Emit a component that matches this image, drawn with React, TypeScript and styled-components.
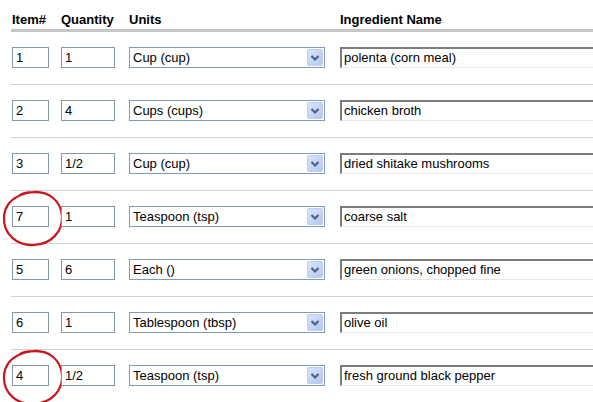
import React from 'react';
import styled, { createGlobalStyle } from 'styled-components';

const GlobalStyle = createGlobalStyle`
  html, body {
    margin: 0;
    padding: 0;
    background: #ffffff;
    overflow: hidden;
  }
  body {
    font-family: "Liberation Sans", Arial, sans-serif;
  }
`;

type Ingredient = {
  item: string;
  qty: string;
  unit: string;
  name: string;
  circled?: boolean;
};

const rows: Ingredient[] = [
  { item: '1', qty: '1', unit: 'Cup (cup)', name: 'polenta (corn meal)' },
  { item: '2', qty: '4', unit: 'Cups (cups)', name: 'chicken broth' },
  { item: '3', qty: '1/2', unit: 'Cup (cup)', name: 'dried shitake mushrooms' },
  { item: '7', qty: '1', unit: 'Teaspoon (tsp)', name: 'coarse salt', circled: true },
  { item: '5', qty: '6', unit: 'Each ()', name: 'green onions, chopped fine' },
  { item: '6', qty: '1', unit: 'Tablespoon (tbsp)', name: 'olive oil' },
  { item: '4', qty: '1/2', unit: 'Teaspoon (tsp)', name: 'fresh ground black pepper', circled: true },
];

// the ingredient column runs off the right edge in the screenshot
const Sheet = styled.div`
  margin-left: 11px;
  width: 582px;
`;

const Row = styled.div<{ $head?: boolean; $last?: boolean }>`
  display: grid;
  grid-template-columns: 49px 68px 211px 1fr;
  align-items: start;
  padding-left: 1px;
  box-sizing: border-box;
  height: ${(p) => (p.$head ? '32px' : '53px')};
  padding-top: ${(p) => (p.$head ? '12px' : '15px')};
  border-bottom: ${(p) =>
    p.$head ? '3px solid #c6c6c6' : p.$last ? 'none' : '1px solid #d2d2d2'};
`;

const HeadCell = styled.div`
  font-size: 13px;
  font-weight: bold;
  line-height: 15px;
  color: #000;
  white-space: nowrap;
`;

const Cell = styled.div`
  position: relative;
  min-width: 0;
`;

const Field = styled.div<{ $w: number }>`
  box-sizing: border-box;
  width: ${(p) => p.$w}px;
  height: 21px;
  border: 1px solid #8696a6;
  background: #fff;
  font-size: 13px;
  line-height: 19px;
  padding-left: 3px;
  color: #000;
  white-space: nowrap;
  overflow: hidden;
`;

const NameField = styled.div`
  box-sizing: border-box;
  width: 100%;
  height: 21px;
  border-top: 2px solid #7c7c7c;
  border-left: 2px solid #7c7c7c;
  border-bottom: 1px solid #e6e6e6;
  background: #fff;
  font-size: 13px;
  line-height: 18px;
  padding-left: 2px;
  color: #000;
  white-space: nowrap;
  overflow: hidden;
`;

const Select = styled.div`
  box-sizing: border-box;
  width: 196px;
  height: 21px;
  border: 1px solid #7f9db9;
  background: #fff;
  display: flex;
  align-items: center;
  justify-content: space-between;
  padding: 0 1px 0 3px;
  font-size: 13px;
  color: #000;
  white-space: nowrap;
`;

const DropButton = styled.span`
  display: flex;
  width: 16px;
  height: 17px;
`;

const Ring = styled.svg`
  position: absolute;
  left: -11px;
  top: -16px;
  width: 64px;
  height: 58px;
  pointer-events: none;
  overflow: visible;
`;

const Arrow = () => (
  <DropButton>
    <svg width="16" height="17" viewBox="0 0 16 17">
      <defs>
        <linearGradient id="dd" x1="0" y1="0" x2="1" y2="1">
          <stop offset="0" stopColor="#dce6fb" />
          <stop offset="1" stopColor="#b3c5f0" />
        </linearGradient>
      </defs>
      <rect x="0.5" y="0.5" width="15" height="16" rx="1.5" fill="url(#dd)" stroke="#bccdf2" />
      <path d="M4.5 7 L8 10.5 L11.5 7" fill="none" stroke="#4d6185" strokeWidth="2.2" />
    </svg>
  </DropButton>
);

const CircleMark = () => (
  <Ring viewBox="0 0 64 58">
    <path
      d="M42 3 C26 0 4 7 3 27 C2 45 17 56 33 55 C50 54 62 42 61 26 C60 11 48 1 32 2 C26 2 22 3 19 5"
      fill="none"
      stroke="#c8161c"
      strokeWidth="2.2"
      strokeLinecap="round"
    />
  </Ring>
);

const App = () => {
  return (
    <>
      <GlobalStyle />
      <Sheet>
        <Row $head>
          <HeadCell>Item#</HeadCell>
          <HeadCell>Quantity</HeadCell>
          <HeadCell>Units</HeadCell>
          <HeadCell>Ingredient Name</HeadCell>
        </Row>
        {rows.map((r, i) => (
          <Row key={i} $last={i === rows.length - 1}>
            <Cell>
              <Field $w={37}>{r.item}</Field>
              {r.circled && <CircleMark />}
            </Cell>
            <Cell>
              <Field $w={54}>{r.qty}</Field>
            </Cell>
            <Cell>
              <Select>
                <span>{r.unit}</span>
                <Arrow />
              </Select>
            </Cell>
            <Cell>
              <NameField>{r.name}</NameField>
            </Cell>
          </Row>
        ))}
      </Sheet>
    </>
  );
};

export default App;
